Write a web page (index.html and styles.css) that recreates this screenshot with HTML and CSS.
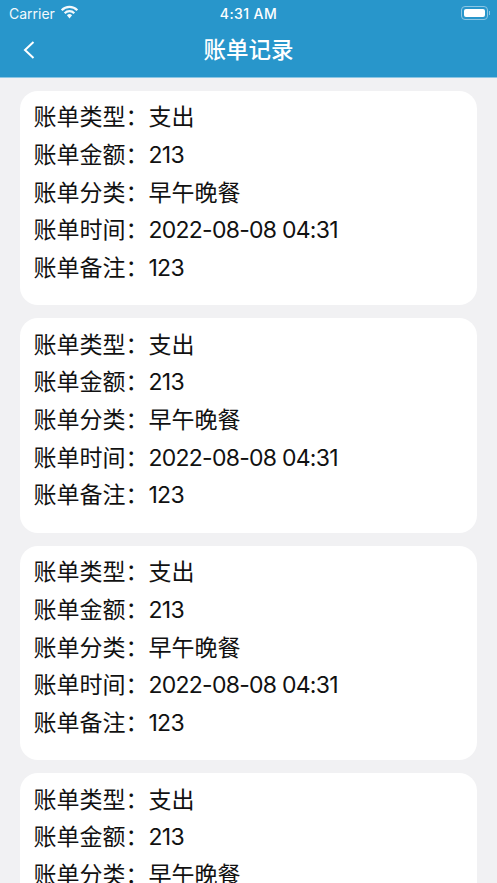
FILE: index.html
```html
<!DOCTYPE html>
<html>
<head>
    <meta charset="UTF-8">
    <meta name="viewport" content="width=device-width, initial-scale=1.0">
    <title>账单记录</title>
    <link rel="stylesheet" href="styles.css">
</head>
<body>
    <header class="header">
        <!-- Status bar -->
        <div class="status-bar">
            <div class="status-left">
                <span>Carrier</span>
                <svg class="wifi" width="19" height="14" viewBox="0 0 19 14">
                    <path d="M1.7 5.2A11 11 0 0 1 17.3 5.2" fill="none" stroke="#fff" stroke-width="2.3"/>
                    <path d="M4.7 8.2A6.8 6.8 0 0 1 14.3 8.2" fill="none" stroke="#fff" stroke-width="2.3"/>
                    <path d="M9.5 13.4L6.9 10.2A4 4 0 0 1 12.1 10.2z" fill="#fff"/>
                </svg>
            </div>
            <span class="status-time">4:31 AM</span>
            <div class="battery">
                <div class="battery-body"><div class="battery-level"></div></div>
                <div class="battery-cap"></div>
            </div>
        </div>
        <!-- Nav bar -->
        <div class="nav-bar">
            <svg class="back" width="12" height="18" viewBox="0 0 12 18">
                <path d="M10.5 1L2 9l8.5 8" fill="none" stroke="#fff" stroke-width="2"/>
            </svg>
            <h1 class="nav-title">账单记录</h1>
        </div>
    </header>

    <div class="list">
        <div class="card">
            <div class="row">账单类型：<span>支出</span></div>
            <div class="row">账单金额：<span class="num">213</span></div>
            <div class="row">账单分类：<span>早午晚餐</span></div>
            <div class="row">账单时间：<span class="num">2022-08-08 04:31</span></div>
            <div class="row">账单备注：<span class="num">123</span></div>
        </div>
        <div class="card">
            <div class="row">账单类型：<span>支出</span></div>
            <div class="row">账单金额：<span class="num">213</span></div>
            <div class="row">账单分类：<span>早午晚餐</span></div>
            <div class="row">账单时间：<span class="num">2022-08-08 04:31</span></div>
            <div class="row">账单备注：<span class="num">123</span></div>
        </div>
        <div class="card">
            <div class="row">账单类型：<span>支出</span></div>
            <div class="row">账单金额：<span class="num">213</span></div>
            <div class="row">账单分类：<span>早午晚餐</span></div>
            <div class="row">账单时间：<span class="num">2022-08-08 04:31</span></div>
            <div class="row">账单备注：<span class="num">123</span></div>
        </div>
        <div class="card">
            <div class="row">账单类型：<span>支出</span></div>
            <div class="row">账单金额：<span class="num">213</span></div>
            <div class="row">账单分类：<span>早午晚餐</span></div>
            <div class="row">账单时间：<span class="num">2022-08-08 04:31</span></div>
            <div class="row">账单备注：<span class="num">123</span></div>
        </div>
    </div>
</body>
</html>
```

FILE: styles.css
```css
body {
    margin: 0;
    padding: 0;
    height: 883px;
    overflow: hidden;
    background-color: #f1f1f3;
    font-family: "Inter", "Noto Sans CJK SC", sans-serif;
    color: #111;
}

.header {
    height: 77px;
    background-color: #2896cb;
    border-bottom: 1px solid #8cc6e4;
    color: #fff;
}

/* Status bar */
.status-bar {
    display: flex;
    align-items: center;
    justify-content: space-between;
    height: 26px;
    padding: 0 7px 0 9px;
    font-size: 14px;
    font-family: "Inter", sans-serif;
}

.status-left {
    display: flex;
    align-items: center;
    gap: 5px;
    width: 120px;
    opacity: 0.95;
}

.wifi {
    margin-bottom: 2px;
}

.status-time {
    margin-left: -2px;
    font-weight: 500;
    letter-spacing: 0.4px;
}

.battery {
    display: flex;
    align-items: center;
    justify-content: flex-end;
    width: 120px;
    gap: 1px;
}

.battery-body {
    width: 27px;
    height: 14px;
    padding: 2px;
    box-sizing: border-box;
    border: 1px solid #8cc6e4;
    border-radius: 4px;
}

.battery-level {
    height: 100%;
    background-color: #fff;
    border-radius: 2px;
}

.battery-cap {
    width: 1px;
    height: 4px;
    background-color: #8cc6e4;
}

/* Nav bar */
.nav-bar {
    position: relative;
    display: flex;
    align-items: center;
    justify-content: center;
    height: 47px;
    padding-bottom: 4px;
    box-sizing: border-box;
}

.back {
    position: absolute;
    left: 23px;
    top: 15px;
}

.nav-title {
    margin: 0;
    font-size: 22.5px;
    font-weight: 500;
    font-family: "Noto Sans CJK SC", sans-serif;
}

/* Bill cards */
.list {
    display: flex;
    flex-direction: column;
    gap: 13px;
    padding: 12.7px 20px 0;
}

.card {
    flex: none;
    height: 214.5px;
    box-sizing: border-box;
    padding: 8.5px 14px 0 13.5px;
    background-color: #fff;
    border-radius: 18px;
}

.row {
    height: 37.7px;
    line-height: 37.7px;
    font-size: 23px;
    white-space: nowrap;
}

.num {
    letter-spacing: -0.75px;
}
```
